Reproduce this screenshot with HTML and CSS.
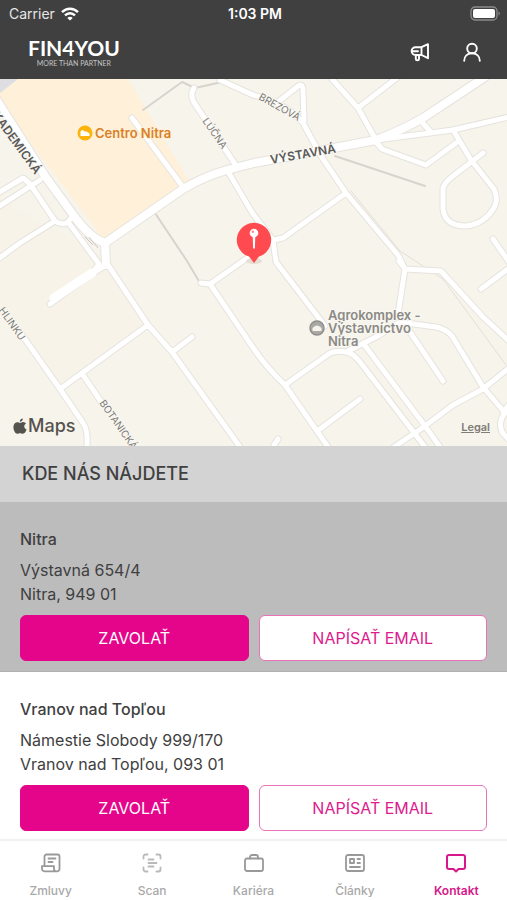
FILE: index.html
```
<!DOCTYPE html>
<html lang="sk">
<head>
<meta charset="UTF-8">
<meta name="viewport" content="width=device-width, initial-scale=1.0">
<title>FIN4YOU - Kontakt</title>
<link rel="stylesheet" href="styles.css">
</head>
<body>

<header class="header">
    <div class="status">
        <div class="carrier">
            <span>Carrier</span>
            <svg width="18" height="14" viewBox="0 0 18 14" fill="none" stroke="#fff" stroke-width="2.4">
                <path d="M1 5.2C5.5.6 12.500.6 17 5.200"/>
                <path d="M4 8.400c2.900-2.900 7.100-2.900 10 0"/>
                <path d="M9 13.600L6.300 10.900c1.500-1.500 3.900-1.500 5.400 0z" fill="#fff" stroke="none"/>
            </svg>
        </div>
        <span class="time">1:03 PM</span>
        <svg class="battery" width="31" height="15" viewBox="0 0 31 15">
            <rect x="1" y="1" width="26" height="13" rx="4" fill="none" stroke="#8b8b8c" stroke-width="1.300"/>
            <rect x="3" y="3" width="22" height="9" rx="2" fill="#fff"/>
            <path d="M28.500 5.500c1.800.6 1.800 3.400 0 4z" fill="#8b8b8c"/>
        </svg>
    </div>
    <div class="topbar">
        <a class="logo" href="#">
            <span class="logo-name">FIN4YOU</span>
            <span class="logo-sub">MORE THAN PARTNER</span>
        </a>
        <div class="actions">
            <button type="button" class="icon-btn" aria-label="Novinky">
                <svg width="20" height="20" viewBox="0 0 20 20" fill="none" stroke="#fff" stroke-width="1.900" stroke-linejoin="round" stroke-linecap="round">
                    <path d="M11.500 5.200H5.500a3.800 3.800 0 0 0 0 7.800h6zM11.500 5.200L18 2.200v14L11.500 13M5.800 13v4c0 1.700 3.200 1.700 3.200 0V13M3 9.200h5"/>
                </svg>
            </button>
            <button type="button" class="icon-btn" aria-label="Profil">
                <svg width="20" height="20" viewBox="0 0 20 20" fill="none" stroke="#fff" stroke-width="1.900" stroke-linecap="round">
                    <circle cx="10" cy="6.500" r="4.800"/>
                    <path d="M2.200 18.800c0-4.600 3.200-7.500 7.800-7.500s7.800 2.900 7.800 7.500"/>
                </svg>
            </button>
        </div>
    </div>
</header>

<main>
    <div class="map">
        <svg class="map-canvas" viewBox="0 0 507 367" preserveAspectRatio="xMidYMid slice">
            <defs>
                <path id="main-roads" d="M-4 20L45 97L77 141Q92 160 105 164L183 110Q205 97 227 91L254 84L376 61Q400 52 423 39L485-2M105 164L106 186"/>
                <path id="side-roads" d="M106 183L148 246L172 273L240 368
                    M30 105L55 142Q62 147 68 143L99 185L93 193
                    M-2 114L23 99L30 105M-2 128L40 101
                    M-2 180L20 164L55 142M68 143L72 138
                    M132 39L183 108
                    M194 9Q189 16 195 25L237 88
                    M220 1L253 16Q285 23 303 44L321 77L346 114L398 176L405 190
                    M278 23L297 8Q302 3 303 10L304 42
                    M332 0L358 29L376 61M358 29L398-2
                    M376 61L453 51L509 38M420 41L430 52M376 63L382 70L426 86L456 64
                    M453 51L471 81L494 110Q498 119 495 127Q485 145 466 147Q445 147 443 130V109Q444 104 453 97L483 74
                    M493 160L509 183
                    M346 114L283 159L273 161L210 205L201 204
                    M227 91L253 135L273 161L276 183L325 247
                    M210 205L254 270Q266 288 285 306L328 368
                    M285 306L330 274Q338 271 346 273L376 258L402 242
                    M346 273Q353 274 360 283L425 368
                    M363 264L425 347L440 368
                    M320 350L360 320
                    M394 368L425 347L453 326L483 310L509 289
                    M399 182L405 190L441 192L483 238L509 262M405 190L398 235
                    M406 244L436 248Q446 250 452 257L483 308L505 334Q498 342 502 353L509 361M503 333L509 326
                    M410 253L443 302M481 210L509 189
                    M22 256L60 310L83 344Q88 350 87 368
                    M60 310L148 246M83 296L102 324M172 273L192 258
                    M50 225L93 194L106 186M274 366L278 360"/>
            </defs>
            <rect width="507" height="367" fill="#f7f4ec"/>
            <path d="M0 120L108 180L148 246L60 310L0 226z" fill="#f7f3e8"/>
            <path d="M17 0H128L190 104L105 162L0 24V13z" fill="#fff0d9"/>
            <path d="M0 0H18L0 14z" fill="#dedee2"/>
            <g class="paths">
                <path d="M143 31L182 3L195 9L222 3M335 77L425 107M155 134L187 182L200 204"/>
                <path class="faint" d="M351 112L400 172L443 200L506 286"/>
            </g>
            <use href="#side-roads" class="casing side-casing"/>
            <use href="#main-roads" class="casing main-casing"/>
            <use href="#side-roads" class="road side"/>
            <use href="#main-roads" class="road main"/>
            <path class="road lot" d="M54 219L92 194"/>
            <path d="M85 158l8 8m-4-8l9 11" stroke="#c9c6c0" fill="none"/>

            <g class="street big">
                <text text-anchor="end" transform="translate(35 96) rotate(54)">AKADEMICKÁ</text>
                <text transform="translate(271 85) rotate(-10)">VÝSTAVNÁ</text>
            </g>
            <g class="street">
                <text transform="translate(202 42) rotate(55)">LÚČNA</text>
                <text transform="translate(258 20) rotate(29)">BREZOVÁ</text>
                <text text-anchor="end" transform="translate(20 262) rotate(55)">HLINKU</text>
                <text transform="translate(99 324) rotate(55)">BOTANICKÁ</text>
            </g>

            <circle cx="85" cy="54" r="7.500" fill="#fcb30c"/>
            <path d="M80.500 57v-4.500q2-3 4 0h2l3 2v2.500z" fill="#fff"/>
            <text class="poi shop" x="95" y="59">Centro Nitra</text>

            <circle cx="317" cy="249" r="7" fill="#aaa9a5" stroke="#90908c" stroke-width="1.500"/>
            <path d="M312.500 252v-3q4.500-5 9 0v3z" fill="#f7f4ec"/>
            <text class="poi">
                <tspan x="328" y="241">Agrokomplex -</tspan>
                <tspan x="328" y="254">Výstavníctvo</tspan>
                <tspan x="328" y="267">Nitra</tspan>
            </text>

            <ellipse cx="254" cy="182" rx="8" ry="3" fill="#e6ddd5"/>
            <path d="M254 184L249 177.500A17.200 17.200 0 1 1 259 177.500z" fill="#ff4b50"/>
            <circle cx="254" cy="154" r="4.300" fill="#fff"/>
            <path d="M252.700 157h2.600l-.4 12-.9 1-.9-1z" fill="#fff"/>
            <circle cx="252.800" cy="152.800" r="1.300" fill="#ff8d90"/>
        </svg>
        <div class="map-brand">
            <svg width="14" height="17" viewBox="0 0 14 17" fill="#55534d">
                <path d="M9.800.6c.2 1.700-1.300 3.300-3 3.200C6.600 2.200 8.200.7 9.800.6zM7 4.900c.8 0 1.700-.9 3.300-.8 1.200.1 2.100.6 2.700 1.500-2.600 1.500-2.200 5 .6 6-.8 2.200-2 4.200-3.700 4.200-1 0-1.500-.6-2.800-.6s-1.800.6-2.800.6C2.200 15.700.4 12.300.4 9c0-3.200 2-4.800 3.900-4.800 1.200 0 2 .7 2.700.7z"/>
            </svg>
            <span>Maps</span>
        </div>
        <a class="map-legal" href="#">Legal</a>
    </div>

    <h1 class="section-title">KDE NÁS NÁJDETE</h1>

    <section class="branch selected">
        <h2>Nitra</h2>
        <p>Výstavná 654/4<br>Nitra, 949 01</p>
        <div class="buttons">
            <button type="button" class="btn call">ZAVOLAŤ</button>
            <button type="button" class="btn email">NAPÍSAŤ EMAIL</button>
        </div>
    </section>
    <section class="branch">
        <h2>Vranov nad Topľou</h2>
        <p>Námestie Slobody 999/170<br>Vranov nad Topľou, 093 01</p>
        <div class="buttons">
            <button type="button" class="btn call">ZAVOLAŤ</button>
            <button type="button" class="btn email">NAPÍSAŤ EMAIL</button>
        </div>
    </section>
</main>

<nav class="tabbar">
    <a href="#">
        <svg viewBox="0 0 20 20">
            <path d="M3.500 12.500V3.500a2 2 0 0 1 2-2h11a2 2 0 0 1 2 2v12.500a2.300 2.300 0 0 1-2.300 2.300H3.500A2.500 2.500 0 0 1 1 15.500v-2.300h12v2.800c0 1.200.8 2.300 2.200 2.300M7.500 5.500h7M7.500 9h4"/>
        </svg>
        <span>Zmluvy</span>
    </a>
    <a href="#" class="light">
        <svg viewBox="0 0 20 20">
            <path d="M1.500 5.500v-2a2 2 0 0 1 2-2h2M14.500 1.500h2a2 2 0 0 1 2 2v2M18.500 14.500v2a2 2 0 0 1-2 2h-2M5.500 18.500h-2a2 2 0 0 1-2-2v-2M6.500 6.500h5M6.500 10h8M6.500 13.500h5"/>
        </svg>
        <span>Scan</span>
    </a>
    <a href="#">
        <svg viewBox="0 0 20 20">
            <rect x="1" y="5.500" width="18" height="12.500" rx="2"/>
            <path d="M6 5.500V4a2 2 0 0 1 2-2h4a2 2 0 0 1 2 2v1.500"/>
        </svg>
        <span>Kariéra</span>
    </a>
    <a href="#">
        <svg viewBox="0 0 20 20">
            <rect x="1" y="2" width="18" height="16" rx="2"/>
            <path d="M5 6h4v4H5zM12.500 6H15M12.500 10H15M5 14h10"/>
        </svg>
        <span>Články</span>
    </a>
    <a href="#" class="active">
        <svg viewBox="0 0 20 20">
            <path d="M3 2h14a2 2 0 0 1 2 2v10a2 2 0 0 1-2 2h-4.500L10 18.500 7.500 16H3a2 2 0 0 1-2-2V4a2 2 0 0 1 2-2z"/>
        </svg>
        <span>Kontakt</span>
    </a>
</nav>

</body>
</html>
```
FILE: styles.css
```
* {
    box-sizing: border-box;
}
body {
    margin: 0;
    min-height: 100vh;
    display: flex;
    flex-direction: column;
    font-family: Inter, "Liberation Sans", sans-serif;
    color: #404041;
    background-color: #fff;
}
a {
    text-decoration: none;
}

/* header */
.header {
    background-color: #404041;
    color: #fff;
    height: 79px;
}
.status {
    display: grid;
    grid-template-columns: 1fr auto 1fr;
    align-items: center;
    height: 27px;
    padding: 0 6px 0 9px;
    font-size: 14px;
}
.carrier {
    display: flex;
    align-items: center;
    gap: 6px;
    color: #e6e6e6;
}
.time {
    font-weight: 600;
}
.battery {
    justify-self: end;
}
.topbar {
    display: flex;
    justify-content: space-between;
    align-items: center;
    height: 50px;
    padding: 0 25px 0 28px;
}
.logo {
    display: flex;
    flex-direction: column;
    align-items: center;
    color: #fff;
    font-family: Lato, sans-serif;
}
.logo-name {
    font-size: 21px;
    line-height: 20px;
    font-weight: bold;
    padding-top: 2px;
}
.logo-sub {
    font-size: 7px;
    line-height: 10px;
    color: #c4c4c4;
}
.actions {
    display: flex;
    gap: 32px;
}
.icon-btn {
    display: flex;
    padding: 0;
    border: none;
    background: none;
    cursor: pointer;
}

/* map */
.map {
    position: relative;
    height: 367px;
    overflow: hidden;
}
.map-canvas {
    display: block;
    width: 100%;
    height: 100%;
}
.casing, .road, .paths {
    fill: none;
    stroke-linejoin: round;
    stroke-linecap: round;
}
.casing {
    stroke: #e6e3de;
}
.side-casing {
    stroke-width: 7px;
}
.main-casing {
    stroke-width: 10px;
}
.road {
    stroke: #fff;
}
.side {
    stroke-width: 5px;
}
.main {
    stroke-width: 8px;
}
.lot {
    stroke-width: 9px;
}
.paths {
    stroke: #d8d4cd;
    stroke-width: 2px;
}
.faint {
    stroke: #e2dfd8;
    stroke-width: 1px;
}
.street {
    font-size: 10px;
    fill: #7c7b78;
    stroke: #f9f7f1;
    stroke-width: 2px;
    paint-order: stroke;
}
.big {
    font-size: 12px;
    font-weight: 600;
    fill: #5b5a58;
}
.poi {
    font-size: 13px;
    font-weight: 600;
    fill: #8b8a86;
    stroke: #f9f7f1;
    stroke-width: 2px;
    paint-order: stroke;
}
.shop {
    fill: #d98126;
    stroke: #fff0d9;
}
.map-brand {
    position: absolute;
    left: 13px;
    bottom: 8px;
    display: flex;
    align-items: center;
    gap: 1px;
    font-size: 18px;
    line-height: 24px;
    font-weight: 500;
    color: #55534d;
}
.map-legal {
    position: absolute;
    right: 17px;
    bottom: 12px;
    font-size: 11px;
    font-weight: 600;
    color: #7f7d78;
    text-decoration: underline;
}

/* branches */
.section-title {
    margin: 0;
    padding: 0 22px;
    font-size: 18px;
    line-height: 56px;
    font-weight: 500;
    background-color: #d3d3d3;
}
.branch {
    padding: 24px 20px 8px;
}
.branch.selected {
    padding-bottom: 10px;
    background-color: #bcbcbc;
    border-bottom: 1px solid #b3b0b0;
}
.branch h2 {
    margin: 0 0 6px;
    font-size: 16px;
    line-height: 26px;
    font-weight: 500;
}
.branch p {
    margin: 0 0 9px;
    font-size: 16px;
    line-height: 24px;
}
.buttons {
    display: flex;
    gap: 10px;
}
.btn {
    flex: 1;
    height: 46px;
    border: 1px solid #e5058b;
    border-radius: 6px;
    font-family: inherit;
    font-size: 16px;
    cursor: pointer;
}
.call {
    background-color: #e5058b;
    color: #fff;
}
.email {
    background-color: #fff;
    border-color: #e873b8;
    color: #dc1b8d;
}

/* bottom tabs */
.tabbar {
    display: flex;
    margin-top: auto;
    height: 61px;
    border-top: 2px solid #f1f1f1;
}
.tabbar a {
    flex: 1;
    display: flex;
    flex-direction: column;
    align-items: center;
    gap: 10px;
    padding-top: 12px;
    font-size: 12px;
    line-height: 16px;
    font-weight: 500;
    color: #a9a9a9;
}
.tabbar svg {
    width: 20px;
    height: 20px;
    fill: none;
    stroke: #999;
    stroke-width: 1.8px;
    stroke-linecap: round;
    stroke-linejoin: round;
}
.tabbar .light svg {
    stroke: #b9b9b9;
}
.tabbar .active {
    color: #d6188a;
    font-weight: 600;
}
.tabbar .active svg {
    stroke: #d6188a;
    stroke-width: 2px;
}
```
